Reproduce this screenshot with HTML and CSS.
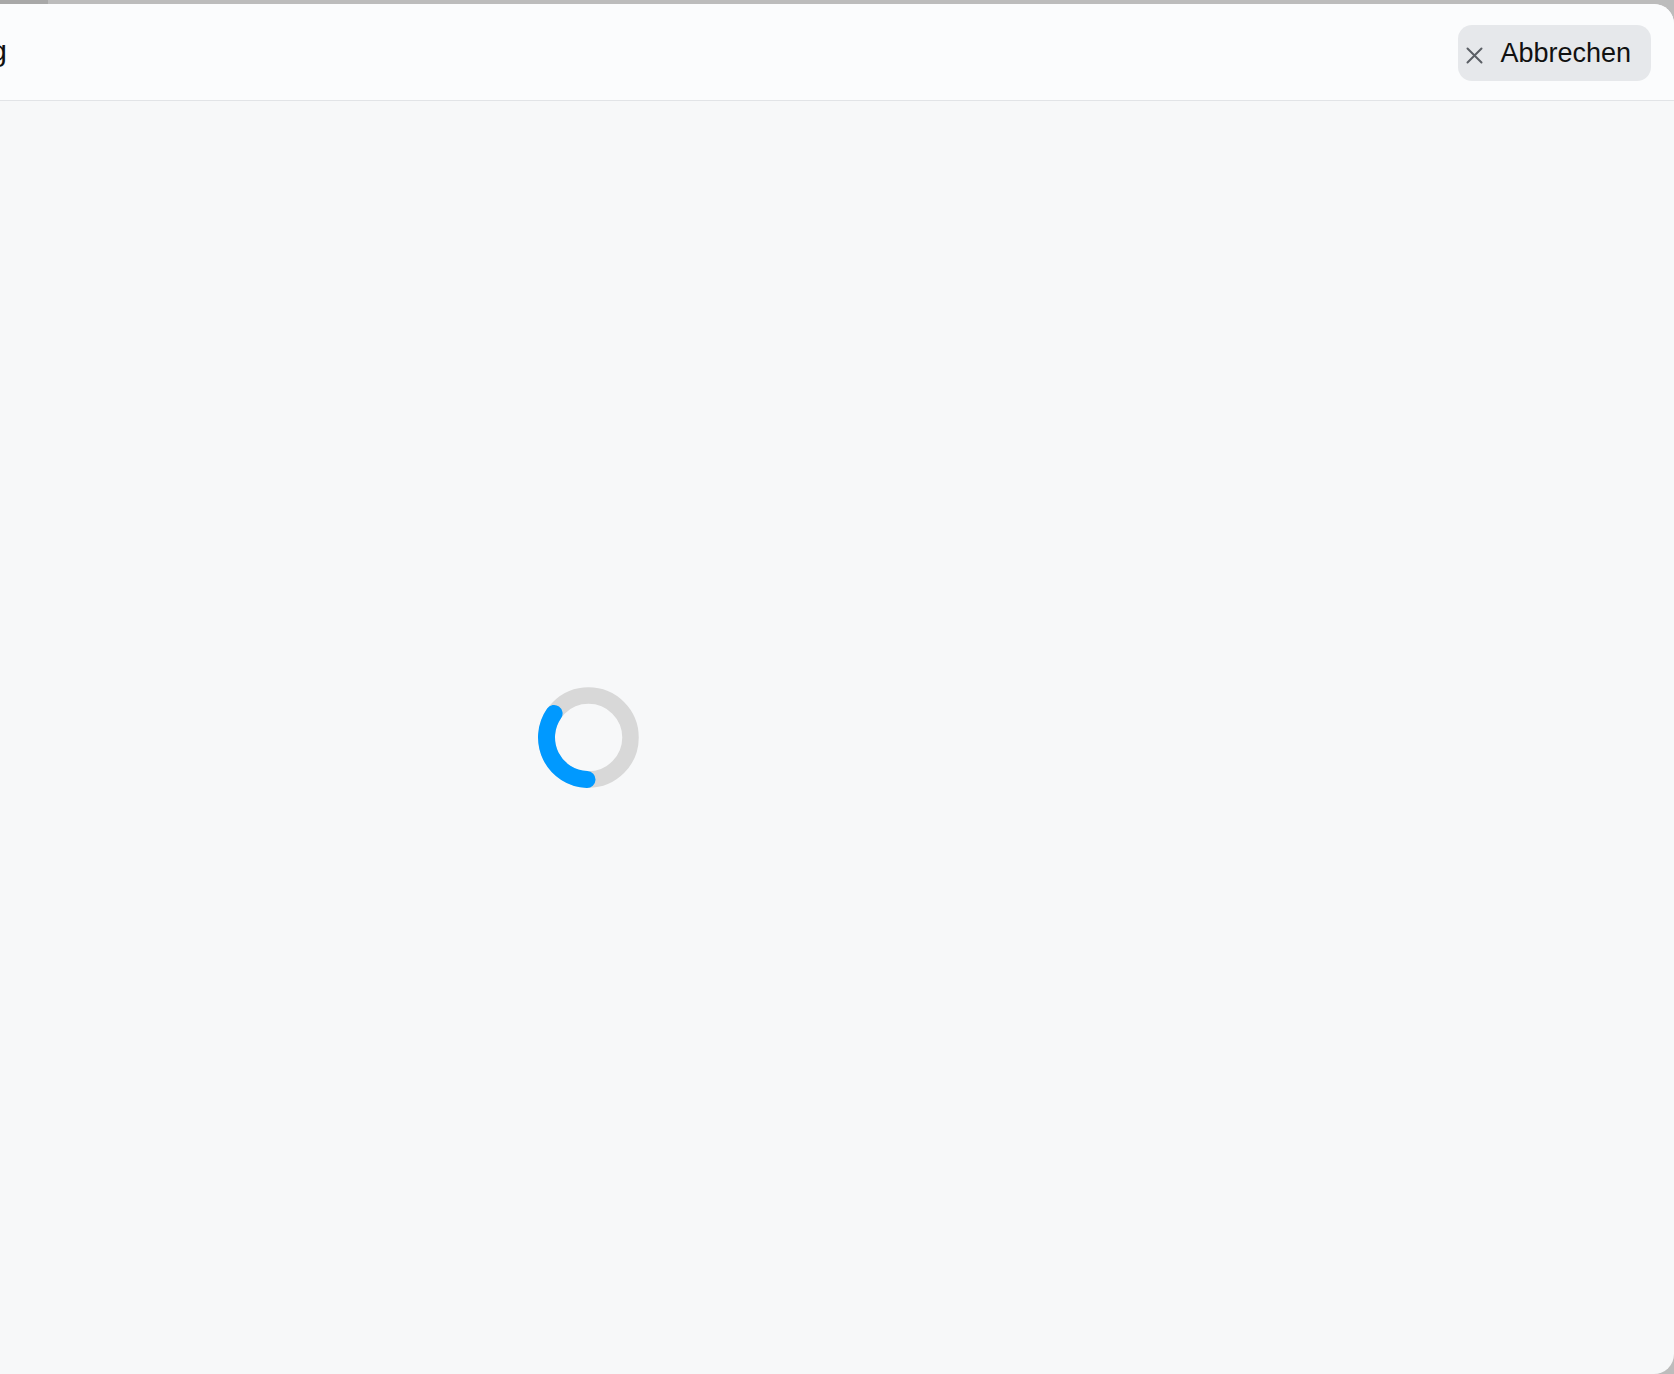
FILE: index.html
```html
<!DOCTYPE html>
<html lang="de">
<head>
    <meta charset="UTF-8">
    <meta name="viewport" content="width=device-width, initial-scale=1.0">
    <title>Bestellung</title>
    <link rel="stylesheet" href="styles.css">
</head>
<body>
    <div class="top-strip">
        <div class="top-tab"></div>
    </div>

    <div class="modal">
        <div class="modal-header">
            <div class="modal-title">Neue Bestellung</div>
            <button class="cancel-button" type="button">
                <svg class="cancel-icon" width="17" height="17" viewBox="0 0 17 17" aria-hidden="true">
                    <path d="M1.5 1.5 L15.5 15.5 M15.5 1.5 L1.5 15.5" stroke="#5b5f65" stroke-width="2" stroke-linecap="round" fill="none"/>
                </svg>
                <span>Abbrechen</span>
            </button>
        </div>

        <div class="modal-body">
            <div class="spinner">
                <svg width="101" height="101" viewBox="0 0 101 101" aria-label="Wird geladen">
                    <circle cx="50.5" cy="50.5" r="42" stroke="#d8d8d8" stroke-width="16.5" fill="none"/>
                    <path d="M49.03 92.47 A42 42 0 0 1 16.1 26.41" stroke="#0099ff" stroke-width="17" stroke-linecap="round" fill="none"/>
                </svg>
            </div>
        </div>
    </div>
</body>
</html>
```

FILE: styles.css
```css
body {
    margin: 0;
    padding: 0;
    font-family: "Liberation Sans", Arial, sans-serif;
    background-color: #bcbcbc;
    height: 100vh;
    overflow: hidden;
    display: flex;
    flex-direction: column;
}

/* 상단 회색 띠 */
.top-strip {
    height: 4px;
    flex: 0 0 4px;
    display: flex;
}
.top-tab {
    width: 48px;
    background-color: #a8a8a8;
}

/* 모달 창 (왼쪽은 화면 밖으로 나감) */
.modal {
    flex: 1;
    margin-left: -497px;
    width: 2171px;
    display: flex;
    flex-direction: column;
    border-radius: 0 20px 20px 0;
    overflow: hidden;
    background-color: #f7f8f9;
}

.modal-header {
    height: 96px;
    flex: 0 0 96px;
    display: flex;
    align-items: center;
    justify-content: space-between;
    background-color: #fbfcfd;
    border-bottom: 1px solid #e2e4e7;
    padding-right: 23px;
}

.modal-title {
    width: 504px;
    text-align: right;
    font-size: 30px;
    color: #111;
    margin-top: -2px;
}

.cancel-button {
    display: flex;
    align-items: center;
    gap: 17px;
    height: 56px;
    padding: 0 20px 0 8px;
    margin-top: 2px;
    border: none;
    border-radius: 14px;
    background-color: #e6e8eb;
    font-family: inherit;
    font-size: 27px;
    color: #111;
    cursor: pointer;
}
.cancel-icon {
    display: block;
    margin-top: 4px;
}

.modal-body {
    flex: 1;
    display: flex;
    align-items: center;
    justify-content: center;
}

.spinner svg {
    display: block;
}
```
